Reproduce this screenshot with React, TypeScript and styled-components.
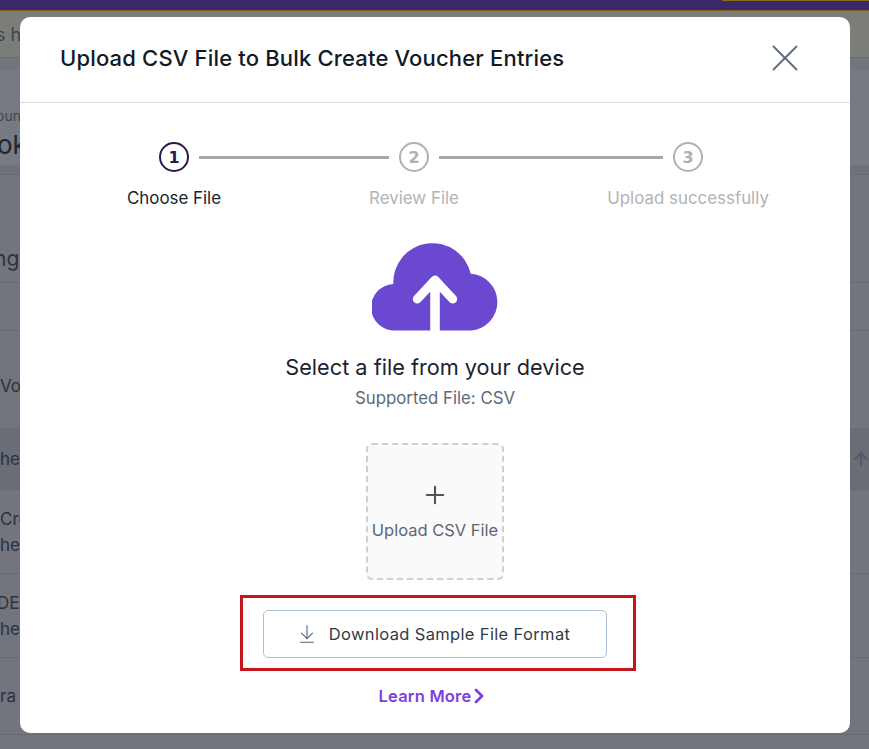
import React from "react";
import styled, { createGlobalStyle } from "styled-components";
import { ArrowUp, X, Plus, ArrowDownToLine, ChevronRight } from "lucide-react";

const GlobalStyle = createGlobalStyle`
  html, body {
    margin: 0;
    padding: 0;
    height: 100%;
    overflow: hidden;
    background: #72757e;
    font-family: "Inter", "Liberation Sans", sans-serif;
  }
  * { box-sizing: border-box; }
`;

const Page = styled.div`
  position: relative;
  width: 869px;
  height: 749px;
  overflow: hidden;
`;

const TopBar = styled.div`
  display: flex;
  justify-content: flex-end;
  height: 11px;
  background: #382a66;
  border-bottom: 1px solid #7d5f24;
`;

const TopBarButton = styled.div`
  width: 147px;
  height: 1px;
  background: #8a6a20;
`;

const Notice = styled.div`
  height: 47px;
  display: flex;
  align-items: center;
  background: #7b7d78;
  border-bottom: 1px solid #85682a;
  color: #3d4450;
  font-size: 18px;
  white-space: nowrap;
`;

const Shifted = styled.span<{ $shift: number }>`
  margin-left: ${({ $shift }) => $shift}px;
`;

const PageHead = styled.div`
  height: 95px;
  margin-top: 12px;
  padding-top: 37px;
  background: #777a82;
  white-space: nowrap;
`;

const Crumb = styled.div`
  font-size: 14px;
  line-height: 18px;
  color: #3f4652;
`;

const HeadTitle = styled.div`
  margin-top: 3px;
  font-size: 26px;
  line-height: 34px;
  color: #20252e;
`;

const TabStrip = styled.div`
  height: 10px;
  background: #6e7179;
  border-bottom: 1px solid #666a73;
`;

const Section = styled.div<{ $height: number; $dark?: boolean; $top?: number }>`
  display: flex;
  align-items: center;
  justify-content: space-between;
  height: ${({ $height }) => $height}px;
  padding-top: ${({ $top }) => $top ?? 0}px;
  border-bottom: 1px solid #666a73;
  background: ${({ $dark }) => ($dark ? "#696d76" : "transparent")};
  color: #2c323c;
  font-size: 17px;
  white-space: nowrap;
`;

const Stack = styled.div`
  line-height: 26px;
`;

const BigLabel = styled.span`
  font-size: 21px;
`;

const SortIcon = styled(ArrowUp)`
  width: 20px;
  height: 20px;
  margin-right: -2px;
  color: #4f5a6b;
`;

const Modal = styled.div`
  position: absolute;
  top: 17px;
  left: 20px;
  width: 830px;
  height: 716px;
  display: flex;
  flex-direction: column;
  background: #fff;
  border-radius: 10px;
`;

const ModalHeader = styled.div`
  display: flex;
  align-items: center;
  justify-content: space-between;
  height: 86px;
  padding: 0 49px 4px 40px;
  border-bottom: 1px solid #d5dcea;
`;

const ModalTitle = styled.h2`
  margin: 0;
  font-size: 22px;
  font-weight: 500;
  letter-spacing: 0.17px;
  color: #111a26;
`;

const CloseIcon = styled(X)`
  width: 46px;
  height: 46px;
  margin-right: -7px;
  color: #5d6b7b;
`;

const StepTrack = styled.div`
  display: flex;
  align-items: center;
  margin-top: 39px;
  padding-left: 139px;
`;

const StepCircle = styled.div<{ $active?: boolean }>`
  display: flex;
  align-items: center;
  justify-content: center;
  width: 30px;
  height: 30px;
  padding-top: 1px;
  border-radius: 50%;
  border: 2px solid ${({ $active }) => ($active ? "#241b52" : "#b0b0b0")};
  color: ${({ $active }) => ($active ? "#241b52" : "#b0b0b0")};
  font-family: "DejaVu Sans", sans-serif;
  font-size: 16px;
  font-weight: 700;
`;

const StepLine = styled.div<{ $width: number }>`
  width: ${({ $width }) => $width}px;
  height: 3px;
  margin: 0 10px;
  background: #a8a8a8;
`;

const StepLabels = styled.div`
  display: grid;
  grid-template-columns: 160px 320px 228px;
  margin-top: 15px;
  padding-left: 74px;
`;

const StepLabel = styled.div<{ $active?: boolean }>`
  text-align: center;
  font-size: 16.9px;
  line-height: 22px;
  color: ${({ $active }) => ($active ? "#1a2330" : "#b3b3b3")};
`;

const Body = styled.div`
  display: flex;
  flex-direction: column;
  align-items: center;
`;

const Cloud = styled.svg`
  display: block;
  width: 126px;
  height: 88px;
  margin-top: 34px;
`;

const SelectText = styled.div`
  margin-top: 22px;
  font-size: 21.7px;
  line-height: 28px;
  color: #1a2330;
`;

const SupportedText = styled.div`
  margin-top: 7px;
  font-size: 16.8px;
  line-height: 20px;
  color: #5c6b7a;
`;

const UploadBox = styled.div`
  display: flex;
  flex-direction: column;
  align-items: center;
  width: 138px;
  height: 137px;
  margin-top: 35px;
  padding-top: 36px;
  border: 2px dashed #cfcfcf;
  border-radius: 6px;
  background: #fafafa;
`;

const PlusIcon = styled(Plus)`
  width: 28px;
  height: 28px;
  color: #50545a;
`;

const UploadText = styled.div`
  margin-top: 10px;
  font-size: 16.5px;
  line-height: 22px;
  white-space: nowrap;
  color: #5a6675;
`;

const Highlight = styled.div`
  display: flex;
  align-items: center;
  justify-content: flex-start;
  width: 396px;
  height: 76px;
  margin-top: 15px;
  margin-left: 6px;
  padding: 2px 0 0 20px;
  border: 3px solid #c4161c;
`;

const DownloadButton = styled.button`
  display: flex;
  align-items: center;
  justify-content: center;
  gap: 11px;
  width: 344px;
  height: 48px;
  padding: 0 4px 0 0;
  border: 1px solid #b0c0da;
  border-radius: 5px;
  background: #fff;
  font-family: inherit;
  font-size: 16.5px;
  letter-spacing: 0.35px;
  color: #333a46;
`;

const DownloadIcon = styled(ArrowDownToLine)`
  width: 22px;
  height: 22px;
  color: #55657c;
`;

const LearnMore = styled.a`
  display: flex;
  align-items: center;
  margin-top: 13px;
  font-size: 16.5px;
  line-height: 22px;
  font-weight: 600;
  letter-spacing: 0.2px;
  color: #7c3fe0;
`;

const LearnMoreChevron = styled(ChevronRight)`
  width: 24px;
  height: 24px;
  margin-left: -4px;
`;

const App = () => {
  return (
    <React.Fragment>
      <GlobalStyle />
      <Page>
        <TopBar>
          <TopBarButton />
        </TopBar>
        <Notice>
          <Shifted $shift={-4}>s have</Shifted>
        </Notice>
        <PageHead>
          <Crumb>
            <Shifted $shift={-4}>ounts</Shifted>
          </Crumb>
          <HeadTitle>
            <Shifted $shift={-3}>ok</Shifted>
          </HeadTitle>
        </PageHead>
        <TabStrip />
        <Section $height={108} $top={60}>
          <BigLabel>
            <Shifted $shift={-6}>ng</Shifted>
          </BigLabel>
        </Section>
        <Section $height={48} />
        <Section $height={98} $top={12}>
          <span>Vo</span>
        </Section>
        <Section $height={61} $dark>
          <span>he</span>
          <SortIcon strokeWidth={2.5} />
        </Section>
        <Section $height={84}>
          <Stack>
            <div>Cre</div>
            <div>he</div>
          </Stack>
        </Section>
        <Section $height={84}>
          <Stack>
            <div>
              <Shifted $shift={-3}>DEI</Shifted>
            </div>
            <div>he</div>
          </Stack>
        </Section>
        <Section $height={77}>
          <span>ra</span>
        </Section>

        <Modal>
          <ModalHeader>
            <ModalTitle>Upload CSV File to Bulk Create Voucher Entries</ModalTitle>
            <CloseIcon strokeWidth={0.95} />
          </ModalHeader>
          <StepTrack>
            <StepCircle $active>1</StepCircle>
            <StepLine $width={190} />
            <StepCircle>2</StepCircle>
            <StepLine $width={224} />
            <StepCircle>3</StepCircle>
          </StepTrack>
          <StepLabels>
            <StepLabel $active>Choose File</StepLabel>
            <StepLabel>Review File</StepLabel>
            <StepLabel>Upload successfully</StepLabel>
          </StepLabels>
          <Body>
            <Cloud viewBox="0 0 126 88">
              <path
                d="M23.5 87.5A23.25 23.25 0 0 1 21.3 41A39.2 39.2 0 0 1 98.7 30.7A28.5 28.5 0 0 1 99.7 87.5Z"
                fill="#6a48d0"
              />
              <path d="M58.2 38H67.8V88H58.2Z" fill="#fff" />
              <path
                d="M45.3 56L63 37L80.7 56"
                fill="none"
                stroke="#fff"
                strokeWidth="9"
                strokeLinecap="round"
                strokeLinejoin="round"
              />
            </Cloud>
            <SelectText>Select a file from your device</SelectText>
            <SupportedText>Supported File: CSV</SupportedText>
            <UploadBox>
              <PlusIcon strokeWidth={1.8} />
              <UploadText>Upload CSV File</UploadText>
            </UploadBox>
            <Highlight>
              <DownloadButton>
                <DownloadIcon strokeWidth={1.2} />
                Download Sample File Format
              </DownloadButton>
            </Highlight>
            <LearnMore>
              Learn More
              <LearnMoreChevron strokeWidth={2.8} />
            </LearnMore>
          </Body>
        </Modal>
      </Page>
    </React.Fragment>
  );
};

export default App;
